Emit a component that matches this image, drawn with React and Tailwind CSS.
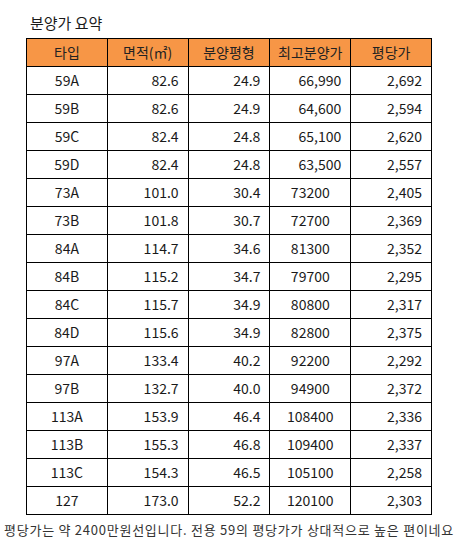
import React from "react";

const rows = [
  ["59A", "82.6", "24.9", "66,990", "2,692"],
  ["59B", "82.6", "24.9", "64,600", "2,594"],
  ["59C", "82.4", "24.8", "65,100", "2,620"],
  ["59D", "82.4", "24.8", "63,500", "2,557"],
  ["73A", "101.0", "30.4", "73200", "2,405"],
  ["73B", "101.8", "30.7", "72700", "2,369"],
  ["84A", "114.7", "34.6", "81300", "2,352"],
  ["84B", "115.2", "34.7", "79700", "2,295"],
  ["84C", "115.7", "34.9", "80800", "2,317"],
  ["84D", "115.6", "34.9", "82800", "2,375"],
  ["97A", "133.4", "40.2", "92200", "2,292"],
  ["97B", "132.7", "40.0", "94900", "2,372"],
  ["113A", "153.9", "46.4", "108400", "2,336"],
  ["113B", "155.3", "46.8", "109400", "2,337"],
  ["113C", "154.3", "46.5", "105100", "2,258"],
  ["127", "173.0", "52.2", "120100", "2,303"],
];

const headers = ["타입", "면적(㎡)", "분양평형", "최고분양가", "평당가"];
const widths = ["w-[81px]", "w-[81px]", "w-[82px]", "w-[81px]", "w-[81px]"];

export default function App() {
  return (
    <div
      className="w-[464px] h-[550px] bg-white text-[#1a1a1a] flex flex-col"
      style={{ fontFamily: '"Noto Sans CJK KR", "Noto Sans", sans-serif' }}
    >
      <div className="pl-[30px] pt-[12px] h-[38px] text-[15px] leading-[22px]">분양가 요약</div>
      <div className="ml-[26px] w-[406px] border-l border-t border-black flex flex-col">
        <div className="flex bg-[#f79646]">
          {headers.map((h, i) => (
            <div
              key={i}
              className={`${widths[i]} h-[28px] border-r border-b border-black flex items-center justify-center text-[14px] text-[#222]`}
            >
              {h}
            </div>
          ))}
        </div>
        {rows.map((r, ri) => (
          <div key={ri} className="flex">
            {r.map((c, ci) => {
              const right = ci > 0 && !(ci === 3 && !c.includes(","));
              return (
                <div
                  key={ci}
                  className={`${widths[ci]} h-[28px] border-r border-b border-black flex items-center text-[14px] ${
                    right ? "justify-end pr-[9px]" : "justify-center"
                  }`}
                >
                  {c}
                </div>
              );
            })}
          </div>
        ))}
      </div>
      <div className="pl-[4px] pt-[5px] text-[13px] leading-[20px] text-[#333] tracking-[0.75px] whitespace-nowrap">
        평당가는 약 2400만원선입니다. 전용 59의 평당가가 상대적으로 높은 편이네요
      </div>
    </div>
  );
}
